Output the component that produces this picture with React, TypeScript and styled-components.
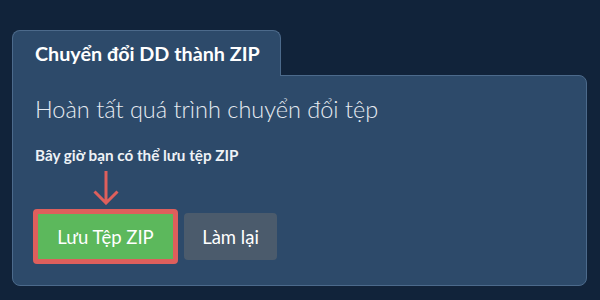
import React from "react";
import styled, { createGlobalStyle } from "styled-components";

const GlobalStyle = createGlobalStyle`
    html, body {
        margin: 0;
        padding: 0;
        background-color: #11233a;
        font-family: Lato, "Noto Sans", "Liberation Sans", sans-serif;
    }
`;

const Page = styled.div`
    width: 600px;
    height: 300px;
    box-sizing: border-box;
    padding: 30px 13px 0 12px;
`;

const Tab = styled.div`
    position: relative;
    z-index: 1;
    display: flex;
    align-items: center;
    width: 269px;
    height: 46px;
    box-sizing: border-box;
    padding: 0 0 0 22px;
    margin-bottom: -1px;
    background-color: #2d4a6a;
    border: 1px solid #4c6a8b;
    border-bottom: none;
    border-radius: 8px 8px 0 0;
    color: #ffffff;
    font-size: 19.75px;
    font-weight: 700;
`;

const Panel = styled.div`
    box-sizing: border-box;
    height: 211px;
    padding: 18px 22px 0 22px;
    background-color: #2d4a6a;
    border: 1px solid #4c6a8b;
    border-radius: 0 8px 8px 8px;
    display: flex;
    flex-direction: column;
`;

const Heading = styled.h2`
    margin: 0;
    font-size: 23.5px;
    font-weight: 300;
    line-height: 30px;
    color: #e6ebf1;
`;

const Hint = styled.p`
    margin: 23px 0 0 0;
    font-size: 15.25px;
    font-weight: 700;
    line-height: 17px;
    color: #eef2f6;
`;

const Actions = styled.div`
    display: flex;
    align-items: flex-start;
    gap: 6px;
    margin-top: 7px;
    margin-left: -2px;
`;

const Pointer = styled.div`
    display: flex;
    flex-direction: column;
    align-items: center;
    gap: 4px;
`;

const Highlight = styled.div`
    border: 5px solid #de5f5c;
    border-radius: 4px;
`;

const Button = styled.button<{ $variant: "primary" | "secondary" }>`
    display: block;
    border: none;
    padding: 0;
    cursor: pointer;
    font-family: inherit;
    font-size: 18.5px;
    font-weight: 400;
    color: #ffffff;
    width: ${p => (p.$variant === "primary" ? "135px" : "93px")};
    height: ${p => (p.$variant === "primary" ? "45px" : "47px")};
    border-radius: ${p => (p.$variant === "primary" ? "0" : "4px")};
    background-color: ${p => (p.$variant === "primary" ? "#5cb85c" : "#4b5b6c")};
    margin-top: ${p => (p.$variant === "primary" ? "0" : "42px")};
`;

const DownArrow = () => (
    <svg width="28" height="34" viewBox="0 0 28 34" aria-hidden="true">
        <path d="M14 0 L14 32 M2.5 20.5 L14 32 L25.5 20.5" fill="none" stroke="#de5f5c" strokeWidth="3" />
    </svg>
);

export default function App() {
    return (
        <Page>
            <GlobalStyle />
            <Tab>Chuyển đổi DD thành ZIP</Tab>
            <Panel>
                <Heading>Hoàn tất quá trình chuyển đổi tệp</Heading>
                <Hint>Bây giờ bạn có thể lưu tệp ZIP</Hint>
                <Actions>
                    <Pointer>
                        <DownArrow />
                        <Highlight>
                            <Button $variant="primary">Lưu Tệp ZIP</Button>
                        </Highlight>
                    </Pointer>
                    <Button $variant="secondary">Làm lại</Button>
                </Actions>
            </Panel>
        </Page>
    );
}
